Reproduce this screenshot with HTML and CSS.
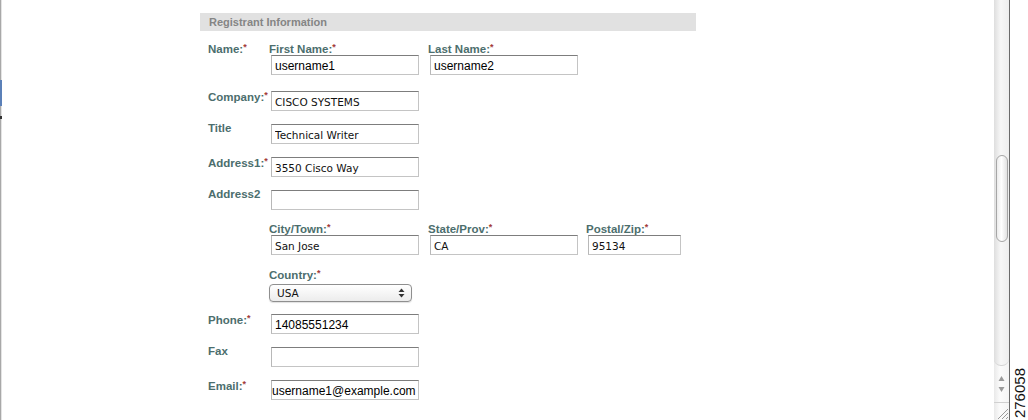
FILE: index.html
```html
<!DOCTYPE html>
<html lang="en">
<head>
    <meta charset="UTF-8">
    <meta name="viewport" content="width=device-width, initial-scale=1.0">
    <title>Registrant Information</title>
    <link rel="stylesheet" href="styles.css">
</head>
<body>
    <div class="window">
        <div class="edge">
            <span class="edge-gap"></span>
            <span class="edge-blue"></span>
            <span class="edge-gap-sm"></span>
            <span class="edge-dark"></span>
        </div>

        <main class="page">
            <form class="form">
                <h3 class="section-title">Registrant Information</h3>

                <!-- Name -->
                <div class="row row-name">
                    <label class="label">Name:<span class="req">*</span></label>
                    <div class="group">
                        <div class="field field-wide">
                            <span class="sublabel">First Name:<span class="req">*</span></span>
                            <input class="input input-sans" type="text" value="username1">
                        </div>
                        <div class="field">
                            <span class="sublabel">Last Name:<span class="req">*</span></span>
                            <input class="input input-sans" type="text" value="username2">
                        </div>
                    </div>
                </div>

                <div class="row row-company">
                    <label class="label">Company:<span class="req">*</span></label>
                    <input class="input" type="text" value="CISCO SYSTEMS">
                </div>

                <div class="row">
                    <label class="label">Title</label>
                    <input class="input" type="text" value="Technical Writer">
                </div>

                <div class="row">
                    <label class="label">Address1:<span class="req">*</span></label>
                    <input class="input" type="text" value="3550 Cisco Way">
                </div>

                <div class="row">
                    <label class="label">Address2</label>
                    <input class="input" type="text" value="">
                </div>

                <!-- City / State / Zip -->
                <div class="row row-city">
                    <span class="label"></span>
                    <div class="group">
                        <div class="field field-wide">
                            <span class="sublabel">City/Town:<span class="req">*</span></span>
                            <input class="input" type="text" value="San Jose">
                        </div>
                        <div class="field field-state">
                            <span class="sublabel">State/Prov:<span class="req">*</span></span>
                            <input class="input" type="text" value="CA">
                        </div>
                        <div class="field">
                            <span class="sublabel">Postal/Zip:<span class="req">*</span></span>
                            <input class="input input-short" type="text" value="95134">
                        </div>
                    </div>
                </div>

                <div class="row row-country">
                    <span class="label"></span>
                    <div class="field">
                        <span class="sublabel">Country:<span class="req">*</span></span>
                        <div class="select">
                            <span>USA</span>
                            <svg width="7" height="10" viewBox="0 0 7 10">
                                <path d="M3.5 0.5 L6.5 4 L0.5 4 Z" fill="#333"/>
                                <path d="M0.5 6 L6.5 6 L3.5 9.5 Z" fill="#333"/>
                            </svg>
                        </div>
                    </div>
                </div>

                <div class="row row-phone">
                    <label class="label">Phone:<span class="req">*</span></label>
                    <input class="input input-sans" type="text" value="14085551234">
                </div>

                <div class="row">
                    <label class="label">Fax</label>
                    <input class="input" type="text" value="">
                </div>

                <div class="row">
                    <label class="label">Email:<span class="req">*</span></label>
                    <input class="input input-sans input-email" type="text" value="username1@example.com">
                </div>
            </form>
        </main>

        <div class="scrollbar">
            <div class="track">
                <span class="track-space-top"></span>
                <span class="thumb"></span>
            </div>
            <div class="arrows">
                <svg width="9" height="24" viewBox="0 0 9 24">
                    <path d="M4.5 4 L7.5 9 L1.5 9 Z" fill="#9a9a9a"/>
                    <path d="M1.5 15 L7.5 15 L4.5 20 Z" fill="#9a9a9a"/>
                </svg>
            </div>
            <div class="grip">
                <svg width="14" height="16" viewBox="0 0 14 16">
                    <path d="M3 15 L13 5 M7 15 L13 9 M11 15 L13 13" stroke="#9a9a9a" stroke-width="1"/>
                </svg>
            </div>
        </div>
        <div class="frame-line"></div>
        <div class="fig">
            <span class="fig-number">276058</span>
        </div>
    </div>
</body>
</html>
```

FILE: styles.css
```css
body {
    margin: 0;
    padding: 0;
    background-color: #ffffff;
    font-family: "Liberation Sans", Arial, sans-serif;
}

.window {
    display: flex;
    width: 1028px;
    height: 420px;
    overflow: hidden;
}

/* thin window edge on the left */
.edge {
    width: 2px;
    display: flex;
    flex-direction: column;
    background: linear-gradient(90deg, #a8a8a8 50%, #e4e4e4 50%);
}

.edge-gap {
    height: 80px;
}

.edge-blue {
    height: 26px;
    background-color: #5b80b8;
}

.edge-gap-sm {
    height: 10px;
}

.edge-dark {
    height: 3px;
    background-color: #333;
}

.page {
    flex: 1;
    padding-left: 198px;
}

.form {
    width: 496px;
}

.section-title {
    margin: 13px 0 0 0;
    height: 18px;
    line-height: 19px;
    padding-left: 9px;
    background-color: #e1e1e1;
    color: #858585;
    font-size: 11px;
    font-weight: bold;
}

/* Rows */
.row {
    display: flex;
    align-items: flex-start;
    margin-top: 13px;
    padding-left: 8px;
}

.row-name {
    margin-top: 10px;
}

.row-company {
    margin-top: 16px;
}

.row-city {
    margin-top: 11px;
}

.row-country {
    margin-top: 12px;
}

.row-phone {
    margin-top: 12px;
}

.label {
    width: 61px;
    flex-shrink: 0;
    margin-top: -3px;
    line-height: 14px;
    font-size: 11.5px;
    font-weight: bold;
    color: #4c6e6d;
}

.row-name .label {
    margin-top: -1px;
}

.req {
    color: #a33a38;
    font-size: 9px;
    vertical-align: 3px;
}

.group {
    display: flex;
}

.field {
    display: flex;
    flex-direction: column;
}

.field-wide {
    width: 159px;
}

.field-state {
    width: 158px;
}

.sublabel {
    height: 14px;
    line-height: 13px;
    font-size: 11.5px;
    font-weight: bold;
    color: #4c6e6d;
}

.input {
    box-sizing: border-box;
    width: 148px;
    height: 20px;
    margin: 0 0 0 2px;
    padding: 1px 0 0 3px;
    border: 1px solid #c4c4c4;
    border-top-color: #7d7d7d;
    border-left-color: #b8b8b8;
    background-color: #ffffff;
    font-family: "DejaVu Sans", Verdana, sans-serif;
    font-size: 10.5px;
    color: #111;
    outline: none;
}

.input-sans {
    padding-left: 3px;
    font-family: "Liberation Sans", Arial, sans-serif;
    font-size: 12px;
    color: #000;
}

.input-email {
    padding-left: 0;
}

.input-short {
    width: 93px;
}

/* Country select */
.select {
    box-sizing: border-box;
    width: 143px;
    height: 18px;
    margin-top: 3px;
    padding: 0 6px 0 7px;
    display: flex;
    align-items: center;
    justify-content: space-between;
    border: 1px solid #8f8f8f;
    border-radius: 4px;
    background: linear-gradient(#ffffff, #ececec);
    box-shadow: 0 1px 1px rgba(0, 0, 0, 0.12);
    font-family: "DejaVu Sans", Verdana, sans-serif;
    font-size: 10.5px;
    color: #111;
}

/* Scrollbar */
.scrollbar {
    width: 15px;
    display: flex;
    flex-direction: column;
    background: linear-gradient(90deg, #e9e9e9, #fbfbfb 40%, #f4f4f4);
}

.track {
    flex: 1;
    display: flex;
    flex-direction: column;
    align-items: center;
    border-radius: 0 0 7px 7px;
    border-bottom: 1px solid #d4d4d4;
    background: linear-gradient(90deg, #dedede, #f7f7f7 45%, #eeeeee);
}

.track-space-top {
    height: 155px;
}

.thumb {
    box-sizing: border-box;
    width: 12px;
    height: 87px;
    border: 1px solid #a6a6a6;
    border-radius: 6px;
    background: linear-gradient(90deg, #ececec, #ffffff 45%, #e2e2e2);
}

.arrows {
    height: 36px;
    display: flex;
    align-items: center;
    justify-content: center;
    border-bottom: 1px solid #d0d0d0;
}

.grip {
    height: 17px;
    display: flex;
    align-items: flex-end;
    justify-content: center;
}

.frame-line {
    width: 1px;
    background-color: #6b6b6b;
}

/* Figure number, rotated */
.fig {
    width: 18px;
    display: flex;
    align-items: flex-end;
    justify-content: center;
}

.fig-number {
    writing-mode: vertical-rl;
    transform: rotate(180deg);
    margin-bottom: 2px;
    font-family: "Liberation Sans", Arial, sans-serif;
    font-size: 15px;
    line-height: 15px;
    color: #111;
}
```
